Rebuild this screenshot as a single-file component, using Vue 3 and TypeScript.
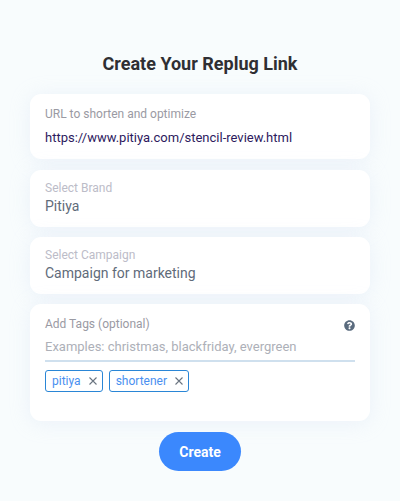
<template>
  <div class="page">
    <h1 class="title">Create Your Replug Link</h1>

    <div class="card url-card">
      <label class="field-label">URL to shorten and optimize</label>
      <div class="url-value">https://www.pitiya.com/stencil-review.html</div>
    </div>

    <div v-for="item in selects" :key="item.label" class="card select-card">
      <label class="select-label">{{ item.label }}</label>
      <div class="select-value">{{ item.value }}</div>
    </div>

    <div class="card tags-card">
      <div class="tags-head">
        <label class="field-label">Add Tags (optional)</label>
        <svg class="help" viewBox="0 0 512 512" fill="currentColor">
          <path d="M504 256c0 137-111 248-248 248S8 393 8 256C8 119 119 8 256 8s248 111 248 248zM262.700 90c-54.500 0-89.300 23-116.500 63.800-3.500 5.300-2.400 12.400 2.700 16.300l34.700 26.300c5.200 3.900 12.600 3 16.700-2.100 17.900-22.700 30.100-35.800 57.300-35.800 20.400 0 45.700 13.100 45.700 33 0 15-12.400 22.700-32.600 34-23.600 13.200-54.800 29.700-54.800 70.900V300c0 6.600 5.400 12 12 12h56c6.600 0 12-5.400 12-12v-1.300c0-28.500 83.400-29.700 83.400-106.900 0-58.200-60.300-101.800-116.800-101.800zM256 338c-25.400 0-46 20.600-46 46 0 25.400 20.600 46 46 46s46-20.600 46-46c0-25.400-20.600-46-46-46z"/>
        </svg>
      </div>
      <div class="tags-input">Examples: christmas, blackfriday, evergreen</div>
      <div class="tag-list">
        <span v-for="tag in tags" :key="tag" class="tag">
          {{ tag }}
          <svg class="tag-x" viewBox="0 0 8 8" fill="none" stroke="currentColor" stroke-width="1.100">
            <path d="M.5.5l7 7M7.500.5l-7 7"/>
          </svg>
        </span>
      </div>
    </div>

    <button class="create-btn">Create</button>
  </div>
</template>

<script setup lang="ts">
const selects = [
  { label: 'Select Brand', value: 'Pitiya' },
  { label: 'Select Campaign', value: 'Campaign for marketing' }
]

const tags = ['pitiya', 'shortener']
</script>

<style>
body {
  margin: 0;
}
</style>

<style scoped>
.page {
  box-sizing: border-box;
  width: 400px;
  height: 501px;
  padding: 52px 30px 0;
  overflow: hidden;
  display: flex;
  flex-direction: column;
  font-family: Roboto, "Liberation Sans", sans-serif;
  background: #f8fcfd;
}

.title {
  margin: 0 0 18px;
  font-size: 18px;
  line-height: 24px;
  font-weight: 700;
  text-align: center;
  color: #2f2f33;
}

.card {
  box-sizing: border-box;
  background: #fff;
  border-radius: 11px;
  padding: 0 15px;
  box-shadow: 0 2px 20px rgba(205, 215, 240, 0.28);
}

.url-card {
  height: 65px;
  padding-top: 12px;
  margin-bottom: 11px;
}

.field-label {
  display: block;
  font-size: 12px;
  line-height: 16px;
  color: #9a9aa3;
}

.url-value {
  margin-top: 6px;
  font-size: 13px;
  line-height: 20px;
  color: #2d1a5e;
}

.select-card {
  height: 57px;
  padding-top: 11px;
  margin-bottom: 10px;
}

.select-label {
  display: block;
  font-size: 12px;
  line-height: 15px;
  color: #bcbcc8;
}

.select-value {
  font-size: 14px;
  line-height: 21px;
  color: #5f6b7a;
}

.tags-card {
  height: 117px;
  padding-top: 12px;
  margin-bottom: 11px;
}

.tags-head {
  display: flex;
  justify-content: space-between;
  align-items: flex-start;
}

.help {
  width: 11px;
  height: 11px;
  margin-top: 4px;
  color: #5a6b7e;
}

.tags-input {
  margin-top: 5px;
  padding-bottom: 3px;
  font-size: 13px;
  line-height: 20px;
  color: #adb0b8;
  border-bottom: 2px solid #cfe0ee;
}

.tag-list {
  display: flex;
  gap: 6px;
  margin-top: 8px;
}

.tag {
  box-sizing: border-box;
  height: 22px;
  display: flex;
  align-items: center;
  gap: 8px;
  padding: 0 5px 0 6px;
  font-size: 12px;
  color: #4a90f0;
  border: 1px solid #2a86d6;
  border-radius: 3px;
}

.tag-x {
  width: 8px;
  height: 8px;
  color: #6a7480;
}

.create-btn {
  align-self: center;
  width: 82px;
  height: 39px;
  border: none;
  border-radius: 20px;
  background: #3b88fd;
  color: #fff;
  font-family: inherit;
  font-size: 14px;
  font-weight: 700;
  cursor: pointer;
}
</style>
